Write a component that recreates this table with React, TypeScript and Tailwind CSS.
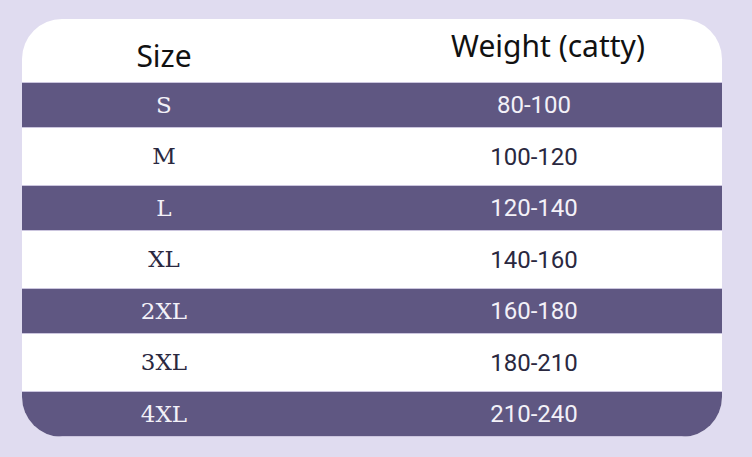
const rows = [
  { size: "S", weight: "80-100" },
  { size: "M", weight: "100-120" },
  { size: "L", weight: "120-140" },
  { size: "XL", weight: "140-160" },
  { size: "2XL", weight: "160-180" },
  { size: "3XL", weight: "180-210" },
  { size: "4XL", weight: "210-240" },
];

export default function App() {
  return (
    <div className="h-[457px] w-[752px] overflow-hidden bg-[#e0dcf0] pt-[19px] pl-[22px]">
      <div className="flex h-[418px] w-[700px] flex-col overflow-hidden rounded-[40px] bg-white">
        <div className="flex h-[63px] shrink-0 items-center text-[30px] text-[#111] [font-family:'Noto_Sans',sans-serif]">
          <div className="w-[284px] pt-[10px] text-center">Size</div>
          <div className="flex-1 pb-[10px] pl-[68px] text-center">Weight (catty)</div>
        </div>
        {rows.map((r, i) => {
          const dark = i % 2 === 0;
          return (
            <div
              key={r.size}
              className={
                dark
                  ? "flex h-[46px] shrink-0 items-center border-y border-[#cbc5de] bg-[#5f5782] text-[#f3f1f8]"
                  : "flex h-[57px] shrink-0 items-center bg-white text-[#2a283f]"
              }
            >
              <div className="w-[284px] text-center text-[23px] [font-family:'DejaVu_Serif',serif]">
                {r.size}
              </div>
              <div className="flex-1 pl-[40px] text-center text-[24px] [font-family:Roboto,sans-serif]">
                {r.weight}
              </div>
            </div>
          );
        })}
      </div>
    </div>
  );
}
